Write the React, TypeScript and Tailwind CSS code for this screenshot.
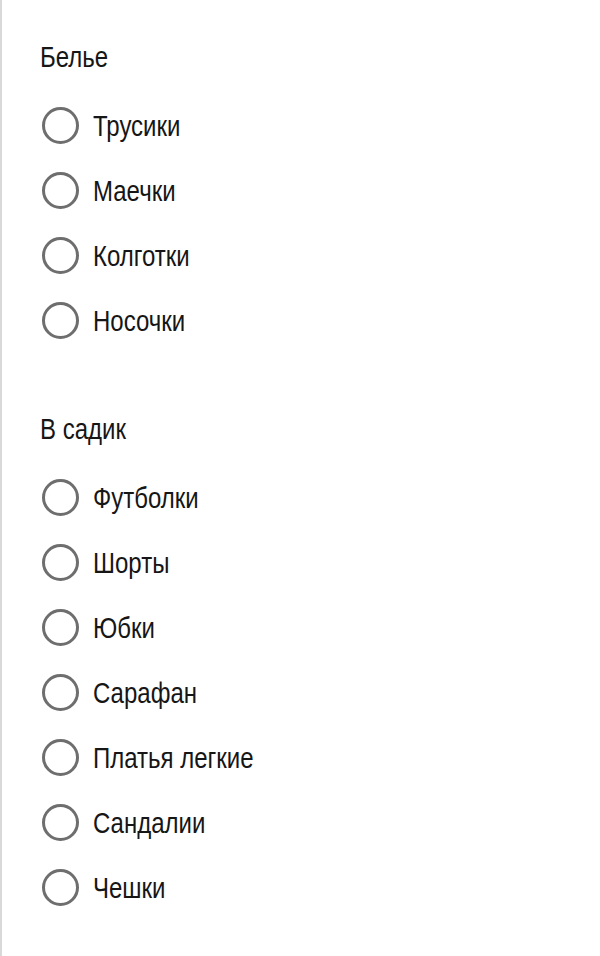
import React from "react";

type Group = { title: string; items: string[] };

const groups: Group[] = [
  { title: "Белье", items: ["Трусики", "Маечки", "Колготки", "Носочки"] },
  {
    title: "В садик",
    items: ["Футболки", "Шорты", "Юбки", "Сарафан", "Платья легкие", "Сандалии", "Чешки"],
  },
];

// Narrowed label text, squeezed horizontally from the left edge
function Narrow({ children }: { children: React.ReactNode }) {
  return <span className="inline-block origin-left scale-x-[0.8] whitespace-nowrap leading-none">{children}</span>;
}

function RadioRow({ label }: { label: string }) {
  return (
    <label className="flex h-[65px] items-center gap-[14px]">
      <span className="box-border h-[37px] w-[37px] shrink-0 rounded-full border-[3px] border-[#6e6e6e] bg-white" />
      <Narrow>{label}</Narrow>
    </label>
  );
}

export default function App() {
  return (
    <div
      className="min-h-[956px] w-[600px] border-l-2 border-[#d9d9d9] bg-white pl-[38px] pt-[20px] text-[30px] text-[#161616]"
      style={{ fontFamily: '"Liberation Sans", Arial, sans-serif' }}
    >
      <div className="flex flex-col gap-[39px]">
        {groups.map((g) => (
          <section key={g.title}>
            <h2 className="flex h-[73px] items-center font-normal">
              <Narrow>{g.title}</Narrow>
            </h2>
            <div className="flex flex-col pl-[2px]">
              {g.items.map((it) => (
                <RadioRow key={it} label={it} />
              ))}
            </div>
          </section>
        ))}
      </div>
    </div>
  );
}
